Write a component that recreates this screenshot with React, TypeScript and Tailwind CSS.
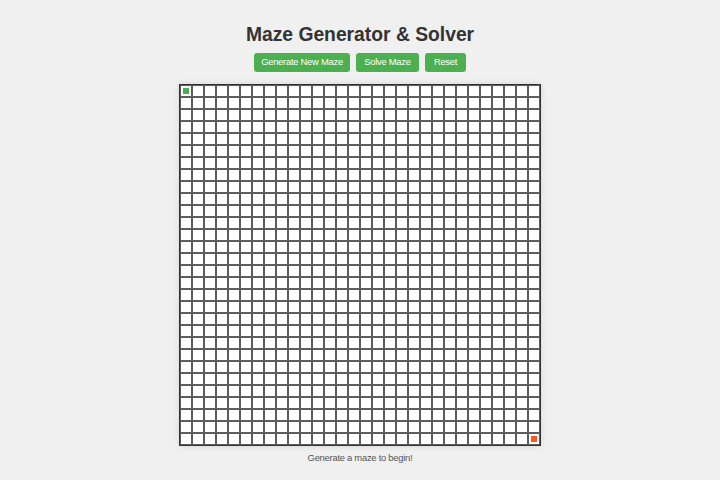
const SIZE = 30;

const Cell = ({ row, col }: { row: number; col: number }) => {
  const isStart = row === 0 && col === 0;
  const isEnd = row === SIZE - 1 && col === SIZE - 1;
  return (
    <div className="w-[12px] h-[12px] border border-[#5c5c5c] bg-white flex items-center justify-center">
      {isStart && <div className="w-[6px] h-[6px] bg-[#4CAF50]" />}
      {isEnd && <div className="w-[6px] h-[6px] bg-[#FF5722]" />}
    </div>
  );
};

export default function App() {
  return (
    <div
      className="min-h-[480px] w-full bg-[#f0f0f0] flex flex-col items-center pt-[22px]"
      style={{ fontFamily: '"Liberation Sans", Arial, sans-serif' }}
    >
      <h1 className="text-[19.3px] leading-[26px] font-bold text-[#333]">Maze Generator &amp; Solver</h1>
      <div className="flex gap-[6px] mt-[5px]">
        <button className="bg-[#4CAF50] text-white text-[9.4px] tracking-[-0.25px] h-[19px] w-[96px] rounded-[3px]">
          Generate New Maze
        </button>
        <button className="bg-[#4CAF50] text-white text-[9.4px] tracking-[-0.25px] h-[19px] w-[63px] rounded-[3px]">
          Solve Maze
        </button>
        <button className="bg-[#4CAF50] text-white text-[9.4px] tracking-[-0.25px] h-[19px] w-[41px] rounded-[3px]">
          Reset
        </button>
      </div>
      <div className="mt-[12px] border-[1px] border-[#333] bg-white shadow-[0_0_6px_rgba(0,0,0,0.12)] grid grid-cols-[repeat(30,12px)]">
        {Array.from({ length: SIZE * SIZE }).map((_, i) => (
          <Cell key={i} row={Math.floor(i / SIZE)} col={i % SIZE} />
        ))}
      </div>
      <p className="mt-[5px] text-[9.4px] tracking-[-0.25px] text-[#555]">Generate a maze to begin!</p>
    </div>
  );
}
